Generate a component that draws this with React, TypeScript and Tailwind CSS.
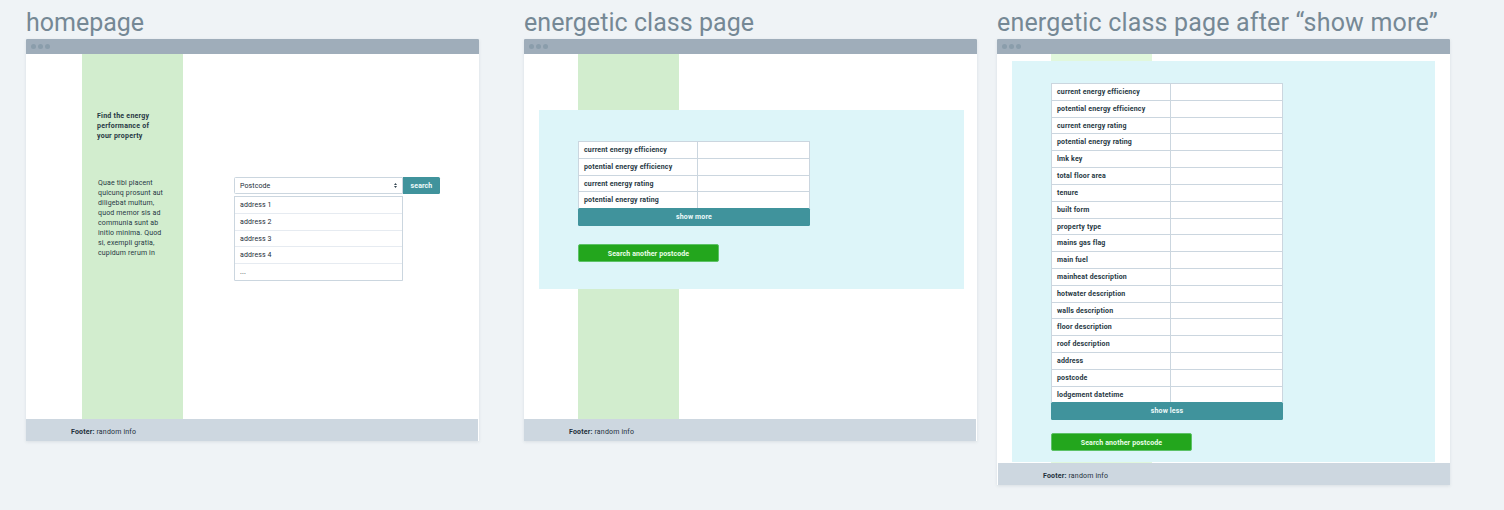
import type { ReactNode } from "react";

const shortRows = [
  "current energy efficiency",
  "potential energy efficiency",
  "current energy rating",
  "potential energy rating",
];

const allRows = [
  ...shortRows,
  "lmk key",
  "total floor area",
  "tenure",
  "built form",
  "property type",
  "mains gas flag",
  "main fuel",
  "mainheat description",
  "hotwater description",
  "walls description",
  "floor description",
  "roof description",
  "address",
  "postcode",
  "lodgement datetime",
];

const addresses = ["address 1", "address 2", "address 3", "address 4", "..."];

function Dots() {
  return (
    <div className="flex h-[15px] items-center gap-[2px] rounded-t-[1px] bg-[#9fadba] pl-[5px]">
      <span className="size-[5px] rounded-full bg-[#8a9dab]" />
      <span className="size-[5px] rounded-full bg-[#8a9dab]" />
      <span className="size-[5px] rounded-full bg-[#8a9dab]" />
    </div>
  );
}

function Screen({ title, titleClass, className, footerClass, children }: {
  title: string;
  titleClass: string;
  className: string;
  footerClass: string;
  children: ReactNode;
}) {
  return (
    <section className="w-[453px] shrink-0">
      <h1 className={`h-[39px] whitespace-nowrap pt-[7px] text-[25px] leading-[31px] text-[#758895] ${titleClass}`}>{title}</h1>
      <div className={`flex flex-col bg-white shadow-[0_1px_3px_rgba(60,80,100,0.12)] ${className}`}>
        <Dots />
        <div className="flex-1">{children}</div>
        <footer className={`h-[22px] w-[452px] bg-[#cdd7e0] pt-[2px] text-[7px] leading-[22px] tracking-[0.17px] text-[#1e2f3c] ${footerClass}`}>
          <b>Footer:</b> random info
        </footer>
      </div>
    </section>
  );
}

function Details({ rows, toggle, className }: { rows: string[]; toggle: string; className: string }) {
  return (
    <>
      <div className="w-[232px]">
        <div className="border-x border-[#cbd6df] bg-white">
          {rows.map((row) => (
            <div key={row} className="flex h-[16.82px] border-t border-[#cbd6df]">
              <div className="w-[119px] border-r border-[#cbd6df] pl-[5px] text-[7px] font-bold leading-[16px] tracking-[0.17px] text-[#263743]">
                {row}
              </div>
            </div>
          ))}
        </div>
        <button className="block h-[17.4px] w-full rounded-[1.5px] bg-[#40939c] text-[7px] font-bold leading-[18px] tracking-[0.15px] text-[#eefafa]">
          {toggle}
        </button>
      </div>
      <button className={`block h-[18px] w-[141px] rounded-[2px] border border-[#5cc267] bg-[#23a61d] text-[7px] font-bold leading-[18px] tracking-[0.12px] text-[#e9ffe9] ${className}`}>
        Search another postcode
      </button>
    </>
  );
}

export default function App() {
  return (
    <main className="flex h-[510px] w-[1504px] items-start overflow-hidden bg-[#eff3f6] pl-[26px] font-[Roboto,sans-serif]">
      <Screen title="homepage" titleClass="tracking-[-0.02px]" className="h-[402px]" footerClass="pl-[45px]">
        <div className="flex h-full pl-[56px]">
          <aside className="w-[101px] bg-[#d2edce] pl-[15px] pt-[57px] text-[7px] leading-[10px] text-[#263743]">
            <h2 className="whitespace-nowrap font-bold tracking-[0.25px]">
              Find the energy
              <br />
              performance of
              <br />
              your property
            </h2>
            <p className="whitespace-nowrap pl-px pt-[37px] tracking-[0.15px]">
              Quae tibi placent
              <br />
              quicunq prosunt aut
              <br />
              diligebat multum,
              <br />
              quod memor sis ad
              <br />
              communia sunt ab
              <br />
              initio minima. Quod
              <br />
              si, exempli gratia,
              <br />
              cupidum rerum in
            </p>
          </aside>
          <div className="pl-[51px] pt-[123px] text-[7px] tracking-[0.1px] text-[#1c2c38]">
            <div className="flex items-start">
              <div className="flex h-[17px] w-[169px] items-center justify-between rounded-l-[1.5px] border border-[#cbd6df] pl-[5px] pr-[5px]">
                <span className="pt-px">Postcode</span>
                <svg width="3" height="5" viewBox="0 0 3 5" fill="#354652">
                  <path d="M1.5 0 3 2H0zM0 3h3L1.5 5z" />
                </svg>
              </div>
              <button className="h-[17.4px] w-[37px] rounded-r-[1.5px] bg-[#40939c] text-[7px] font-bold leading-[19px] text-[#eefafa]">
                search
              </button>
            </div>
            <ul className="mt-[1.6px] w-[169px] rounded-b-[1.5px] border-x border-b border-[#cbd6df]">
              {addresses.map((address) => (
                <li
                  key={address}
                  className="h-[16.8px] border-t border-[#e6ebf1] pl-[5px] leading-[16px] first:border-[#cbd6df]"
                >
                  {address}
                </li>
              ))}
            </ul>
          </div>
        </div>
      </Screen>

      <div className="w-[45px] shrink-0" />
      <Screen title="energetic class page" titleClass="tracking-[0.05px]" className="h-[402px]" footerClass="pl-[45px]">
        <div className="flex h-full flex-col">
          <div className="ml-[54px] h-[56px] w-[101px] bg-[#d2edce]" />
          <div className="ml-[15px] h-[179px] w-[425px] bg-[#ddf5f9] pl-[39px] pt-[31px]">
            <Details rows={shortRows} toggle="show more" className="mt-[18.3px]" />
          </div>
          <div className="ml-[54px] w-[101px] flex-1 bg-[#d2edce]" />
        </div>
      </Screen>

      <div className="w-[20px] shrink-0" />
      <Screen title="energetic class page after “show more”" titleClass="tracking-[0.18px]" className="h-[446px]" footerClass="ml-px pl-[45px]">
        <div className="flex h-full flex-col">
          <div className="ml-[54px] h-[7px] w-[101px] bg-[#e1f7dc]" />
          <div className="ml-[15px] h-[401px] w-[423px] bg-[#ddf5f9] pl-[39px] pt-[22px]">
            <Details rows={allRows} toggle="show less" className="mt-[13px]" />
          </div>
          <div className="ml-[54px] w-[101px] flex-1 bg-[#e1f7dc]" />
        </div>
      </Screen>
    </main>
  );
}
